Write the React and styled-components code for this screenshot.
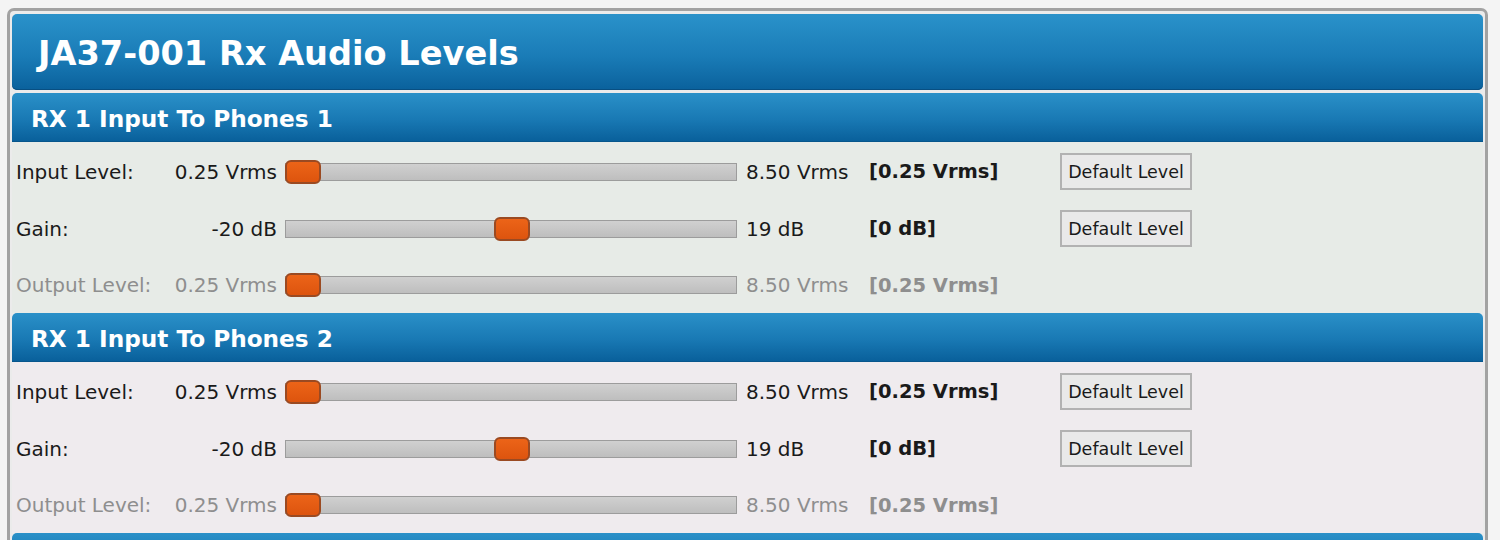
import React from "react";
import styled, { createGlobalStyle } from "styled-components";

const GlobalStyle = createGlobalStyle`
  html, body {
    margin: 0;
    padding: 0;
    background: #ffffff;
  }
`;

const Viewport = styled.div`
  height: 540px;
  overflow: hidden;
  background: #f4f4f4;
  padding: 8px 0 0 7px;
  box-sizing: border-box;
`;

const Frame = styled.div`
  width: 1481px;
  box-sizing: border-box;
  border: 3px solid #a2a2a2;
  border-bottom: none;
  border-radius: 7px 7px 0 0;
  padding: 3px 2px 0 2px;
  background: #ebebeb;
  font-family: "DejaVu Sans", Verdana, sans-serif;
`;

const TitleBar = styled.h1`
  margin: 0 0 3px;
  height: 76px;
  display: flex;
  align-items: center;
  padding: 3px 0 0 26px;
  box-sizing: border-box;
  border-radius: 5px;
  background: linear-gradient(#2a92ca, #1a7cb7 55%, #0a619c);
  box-shadow: inset 0 -1px 0 #084f82;
  color: #ffffff;
  font-size: 33.6px;
  font-weight: bold;
`;

const SectionHeader = styled.h2`
  margin: 0;
  height: 49px;
  display: flex;
  align-items: center;
  padding: 3px 0 0 19px;
  border-radius: 5px 5px 0 0;
  background: linear-gradient(#2a90c8, #1979b4 55%, #09609b);
  border-bottom: 1px solid #07568c;
  box-sizing: border-box;
  color: #ffffff;
  font-size: 23.2px;
  font-weight: bold;
`;

const SectionBody = styled.div`
  background: ${(p) => p.$tint};
  padding-top: 1px;
`;

const Row = styled.div`
  display: grid;
  grid-template-columns: 150px 111px 469px 123px 191px 132px;
  align-items: center;
  height: ${(p) => p.$height}px;
  padding-left: 4px;
  font-size: 20px;
  color: ${(p) => (p.$disabled ? "#8e8e8e" : "#1a1a1a")};
  white-space: nowrap;
`;

const Label = styled.span``;

const MinValue = styled.span`
  text-align: right;
`;

const MaxValue = styled.span``;

const Current = styled.span`
  font-weight: bold;
  font-size: 19.5px;
`;

const TrackCell = styled.div`
  padding: 0 9px 0 8px;
`;

const Track = styled.div`
  position: relative;
  height: 18px;
  box-sizing: border-box;
  border: 1px solid #9c9c9c;
  background: linear-gradient(#d0d0d0, #bebebe);
`;

const Thumb = styled.div`
  position: absolute;
  top: -4px;
  width: 36px;
  height: 24px;
  box-sizing: border-box;
  border: 2px solid #9a4a22;
  border-radius: 6px;
  background: linear-gradient(#ec6418, #dd540e);
`;

const DefaultButton = styled.button`
  height: 37px;
  width: 132px;
  padding: 0;
  border: 2px solid #b2b2b2;
  background: #e9e9e9;
  font-family: "DejaVu Sans", Verdana, sans-serif;
  font-size: 17.5px;
  color: #1a1a1a;
`;

const THUMB = 36;
const TRACK = 452;

const Slider = ({ min, max, value }) => {
  const left = ((value - min) / (max - min)) * (TRACK - THUMB) - 1;
  return (
    <TrackCell>
      <Track>
        <Thumb style={{ left }} />
      </Track>
    </TrackCell>
  );
};

const rows = [
  { label: "Input Level:", min: 0.25, max: 8.5, value: 0.25, unit: "Vrms", fixed: 2, button: true },
  { label: "Gain:", min: -20, max: 19, value: -0.4, shown: 0, unit: "dB", fixed: 0, button: true },
  { label: "Output Level:", min: 0.25, max: 8.5, value: 0.25, unit: "Vrms", fixed: 2, disabled: true },
];

const sections = [
  { title: "RX 1 Input To Phones 1", tint: "#e7ebe7" },
  { title: "RX 1 Input To Phones 2", tint: "#efebee" },
];

const fmt = (v, fixed, unit) => `${v.toFixed(fixed)} ${unit}`;

export default function App() {
  return (
    <>
      <GlobalStyle />
      <Viewport>
        <Frame>
          <TitleBar>JA37-001 Rx Audio Levels</TitleBar>
          {sections.map((s) => (
            <section key={s.title}>
              <SectionHeader>{s.title}</SectionHeader>
              <SectionBody $tint={s.tint}>
                {rows.map((r, i) => (
                  <Row key={r.label} $disabled={r.disabled} $height={i === 2 ? 56 : 57}>
                    <Label>{r.label}</Label>
                    <MinValue>{fmt(r.min, r.fixed, r.unit)}</MinValue>
                    <Slider min={r.min} max={r.max} value={r.value} />
                    <MaxValue>{fmt(r.max, r.fixed, r.unit)}</MaxValue>
                    <Current>[{fmt(r.shown ?? r.value, r.fixed, r.unit)}]</Current>
                    {r.button ? <DefaultButton>Default Level</DefaultButton> : <span />}
                  </Row>
                ))}
              </SectionBody>
            </section>
          ))}
          {/* next section's header, cut off by the bottom of the view */}
          <SectionHeader aria-hidden="true" />
        </Frame>
      </Viewport>
    </>
  );
}
